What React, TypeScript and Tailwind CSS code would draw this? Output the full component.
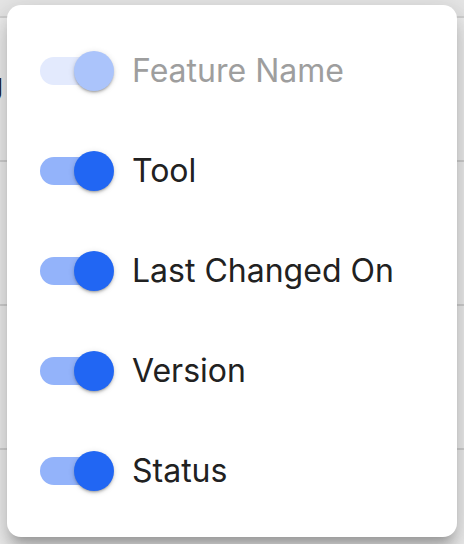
import React, { useState } from "react";

type Col = { id: string; label: string; on: boolean; disabled?: boolean };

const initial: Col[] = [
  { id: "name", label: "Feature Name", on: true, disabled: true },
  { id: "tool", label: "Tool", on: true },
  { id: "changed", label: "Last Changed On", on: true },
  { id: "version", label: "Version", on: true },
  { id: "status", label: "Status", on: true },
];

function Switch({ on, disabled, onClick }: { on: boolean; disabled?: boolean; onClick: () => void }) {
  return (
    <button
      type="button"
      onClick={onClick}
      disabled={disabled}
      className="relative flex h-[76px] w-[116px] shrink-0 items-center"
    >
      {/* track */}
      <span
        className={
          "absolute left-[24px] top-[24px] h-[28px] w-[68px] rounded-full " +
          (disabled ? "bg-[#e3eafd]" : on ? "bg-[#93b3fa]" : "bg-[#bdbdbd]")
        }
      />
      {/* thumb */}
      <span
        className={
          "absolute top-[18px] h-[40px] w-[40px] rounded-full shadow-[0_2px_2px_-1px_rgba(0,0,0,0.2),0_2px_3px_0_rgba(0,0,0,0.14),0_1px_6px_0_rgba(0,0,0,0.12)] " +
          (on ? "left-[58px] " : "left-[18px] ") +
          (disabled ? "bg-[#abc4fb]" : on ? "bg-[#2166f3]" : "bg-[#fafafa]")
        }
      />
    </button>
  );
}

export default function App() {
  const [cols, setCols] = useState(initial);
  const toggle = (id: string) =>
    setCols((c) => c.map((x) => (x.id === id ? { ...x, on: !x.on } : x)));

  return (
    <div className="relative h-[544px] w-[464px] overflow-hidden bg-white font-['Inter',sans-serif]">
      {/* table behind the menu */}
      <div className="flex flex-col text-[32px] text-[#212121]">
        <div className="h-[18px] border-b-2 border-[#e0e0e0] bg-[#f5f5f5]" />
        <div className="flex h-[144px] items-center border-b-2 border-[#e0e0e0] pt-[4px]">
          <span className="-ml-[20px]">U</span>
        </div>
        <div className="flex h-[144px] items-center border-b-2 border-[#e0e0e0] pt-[4px]">
          <span className="-ml-[13px]">r</span>
        </div>
        <div className="flex h-[144px] items-center border-b-2 border-[#e0e0e0] pt-[4px]">
          <span className="-ml-[13px]">r</span>
        </div>
        <div className="flex h-[144px] items-center pt-[4px]">
          <span className="-ml-[13px]">r</span>
        </div>
      </div>
      <div className="absolute inset-0 bg-black/[0.06]" />

      {/* column menu */}
      <div className="absolute left-[7px] top-[5px] w-[450px] rounded-[14px] bg-white py-[16px] shadow-[0_10px_10px_-6px_rgba(0,0,0,0.2),0_16px_20px_2px_rgba(0,0,0,0.14),0_6px_28px_4px_rgba(0,0,0,0.12)]">
        {cols.map((c) => (
          <div key={c.id} className="flex h-[100px] items-center pl-[9px]">
            <Switch on={c.on} disabled={c.disabled} onClick={() => toggle(c.id)} />
            <span
              className={
                "text-[32px] leading-none " +
                (c.disabled ? "text-[#9e9e9e]" : "text-[#212121]")
              }
            >
              {c.label}
            </span>
          </div>
        ))}
      </div>
    </div>
  );
}
